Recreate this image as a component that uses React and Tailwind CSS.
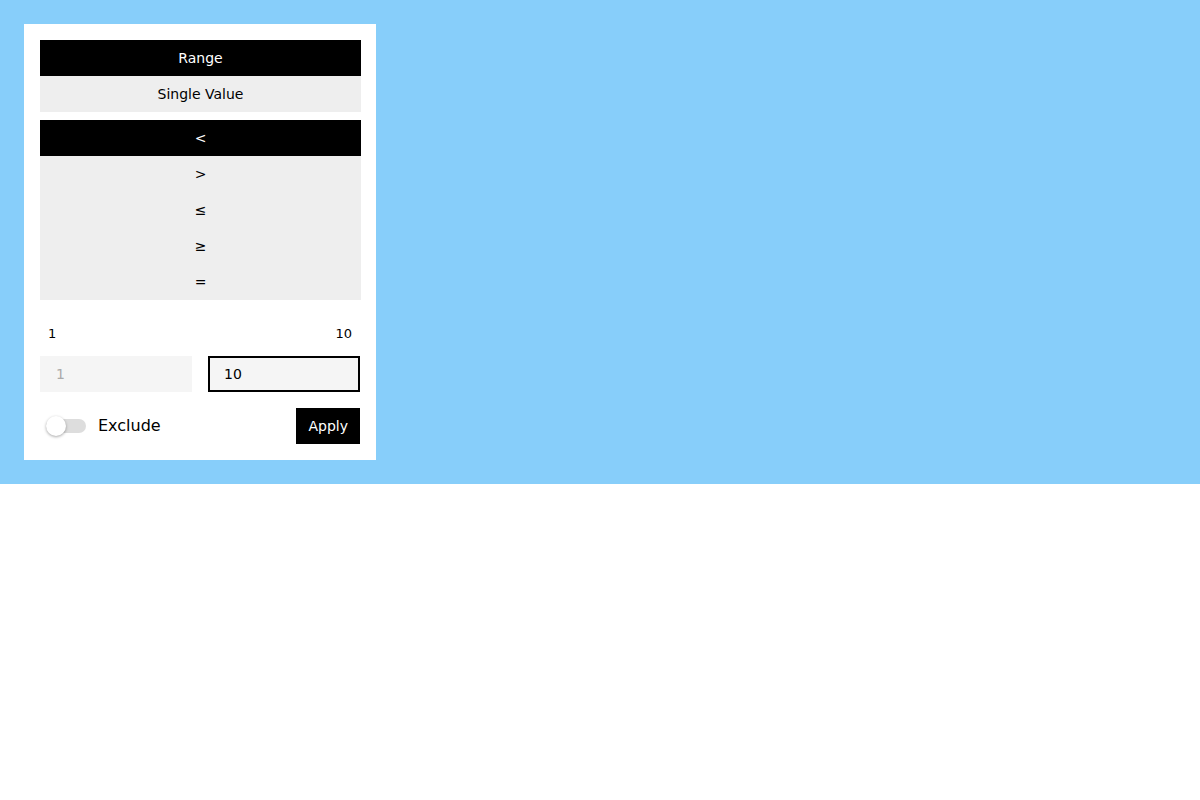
import React from "react";

export default function App() {
  const font = { fontFamily: '"DejaVu Sans", sans-serif' };
  const ops = ["<", ">", "≤", "≥", "="];
  return (
    <div style={font} className="bg-[#87cefa] p-6 w-full">
      <div className="bg-white w-[352px] p-4 flex flex-col">
        <div className="flex flex-col w-[321px]">
          <div className="h-9 flex items-center justify-center bg-black text-white text-sm">Range</div>
          <div className="h-9 flex items-center justify-center bg-[#eeeeee] text-black text-sm">Single Value</div>
        </div>
        <div className="flex flex-col w-[321px] mt-2">
          {ops.map((o, i) => (
            <div
              key={o}
              className={
                i === 0
                  ? "h-9 flex items-center justify-center bg-black text-white text-sm"
                  : "h-9 flex items-center justify-center bg-[#eeeeee] text-black text-sm"
              }
            >
              {o}
            </div>
          ))}
        </div>
        <div className="mt-4 h-8 pt-1 flex items-center justify-between px-2 text-[13px] text-black">
          <span>1</span>
          <span>10</span>
        </div>
        <div className="mt-2 flex gap-4">
          <div className="flex-1 h-9 bg-[#f5f5f5] flex items-center px-4 text-sm text-[#aaaaaa]">1</div>
          <div className="flex-1 h-9 bg-[#f5f5f5] border-2 border-black flex items-center px-[14px] text-sm text-black">10</div>
        </div>
        <div className="mt-4 h-9 flex items-center justify-between">
          <div className="flex items-center">
            <div className="relative w-10 h-[14px] ml-1.5 rounded-full bg-[#dddddd]">
              <div className="absolute left-0 -top-[3px] w-5 h-5 rounded-full bg-white shadow-[0_1px_3px_rgba(0,0,0,0.35)]"></div>
            </div>
            <span className="ml-3 text-base text-black">Exclude</span>
          </div>
          <div className="h-9 px-3 bg-black text-white text-sm flex items-center">Apply</div>
        </div>
      </div>
    </div>
  );
}
